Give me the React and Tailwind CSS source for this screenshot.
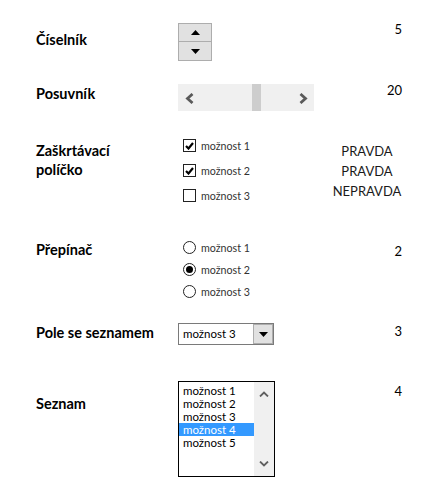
import React from 'react';

const font = { fontFamily: 'Lato, "Liberation Sans", sans-serif' };

function Label({ children, className = '' }) {
  return (
    <div className={`w-[142px] shrink-0 text-[14.5px] font-bold leading-[19px] text-black ${className}`}>
      {children}
    </div>
  );
}

function Value({ children, className = '' }) {
  return (
    <div className={`w-[100px] shrink-0 text-right text-[13px] leading-[16px] text-black ${className}`}>
      {children}
    </div>
  );
}

function Spinner() {
  return (
    <div className="flex h-[38px] w-[34px] flex-col">
      <div className="flex h-[19px] items-center justify-center border border-[#adadad] bg-[#e1e1e1]">
        <svg width="9" height="5" viewBox="0 0 9 5">
          <polygon points="0,5 9,5 4.5,0" fill="#000" />
        </svg>
      </div>
      <div className="flex h-[19px] items-center justify-center border border-t-0 border-[#adadad] bg-[#e1e1e1]">
        <svg width="9" height="5" viewBox="0 0 9 5">
          <polygon points="0,0 9,0 4.5,5" fill="#000" />
        </svg>
      </div>
    </div>
  );
}

function ScrollBar() {
  return (
    <div className="flex h-[27px] w-[136px] items-stretch bg-[#f0f0f0]">
      <div className="flex w-[22px] items-center justify-center pt-[2px]">
        <svg width="9" height="11" viewBox="0 0 9 11">
          <polyline points="7.5,1 2.5,5.5 7.5,10" fill="none" stroke="#5a5a5a" strokeWidth="2.8" />
        </svg>
      </div>
      <div className="w-[52px]" />
      <div className="w-[9px] bg-[#cdcdcd]" />
      <div className="flex-1" />
      <div className="flex w-[22px] items-center justify-center pt-[2px]">
        <svg width="9" height="11" viewBox="0 0 9 11">
          <polyline points="1.5,1 6.5,5.5 1.5,10" fill="none" stroke="#5a5a5a" strokeWidth="2.8" />
        </svg>
      </div>
    </div>
  );
}

function Check({ checked, label }) {
  return (
    <div className="flex h-[25px] items-center gap-[5px]">
      <div className="flex h-[13px] w-[13px] items-center justify-center border border-[#222] bg-white">
        {checked && (
          <svg width="9" height="8" viewBox="0 0 9 8">
            <polyline points="1,4 3.5,6.5 8,1" fill="none" stroke="#000" strokeWidth="2.2" />
          </svg>
        )}
      </div>
      <span className="text-[10.7px] leading-[13px] text-[#333]">{label}</span>
    </div>
  );
}

function Radio({ checked, label }) {
  return (
    <div className="flex h-[22px] items-center gap-[5px]">
      <div className="flex h-[13px] w-[13px] items-center justify-center rounded-full border border-[#222] bg-white">
        {checked && <div className="h-[7px] w-[7px] rounded-full bg-black" />}
      </div>
      <span className="text-[10.7px] leading-[13px] text-[#333]">{label}</span>
    </div>
  );
}

function Combo() {
  return (
    <div className="flex h-[22px] w-[96px] border border-[#7a7a7a] bg-white">
      <div className="flex flex-1 items-center pl-[4px] text-[11.5px] text-black">možnost 3</div>
      <div className="flex w-[20px] items-center justify-center border border-[#adadad] bg-[#e1e1e1]">
        <svg width="9" height="5" viewBox="0 0 9 5">
          <polygon points="0,0 9,0 4.5,5" fill="#000" />
        </svg>
      </div>
    </div>
  );
}

function ListBox() {
  const items = ['možnost 1', 'možnost 2', 'možnost 3', 'možnost 4', 'možnost 5'];
  return (
    <div className="flex h-[96px] w-[97px] border border-black bg-white">
      <div className="flex flex-1 flex-col pt-[2px]">
        {items.map((it, i) => (
          <div
            key={it}
            className={`h-[13px] pl-[4px] text-[11.5px] leading-[13px] ${i === 3 ? 'bg-[#3399ff] text-white' : 'text-black'}`}
          >
            {it}
          </div>
        ))}
      </div>
      <div className="flex w-[20px] flex-col justify-between bg-[#f0f0f0] py-[9px]">
        <svg className="mx-auto" width="10" height="6" viewBox="0 0 10 6">
          <polyline points="1,5.5 5,1.5 9,5.5" fill="none" stroke="#606060" strokeWidth="1.8" />
        </svg>
        <svg className="mx-auto" width="10" height="6" viewBox="0 0 10 6">
          <polyline points="1,0.5 5,4.5 9,0.5" fill="none" stroke="#606060" strokeWidth="1.8" />
        </svg>
      </div>
    </div>
  );
}

export default function App() {
  return (
    <div className="h-[496px] w-[441px] bg-white pl-[36px] pt-[20px]" style={font}>
      {/* Číselník */}
      <div className="flex h-[50px]">
        <Label className="pt-[10px]">Číselník</Label>
        <div className="w-[124px] shrink-0 pt-[3px]">
          <Spinner />
        </div>
        <Value className="pt-[1px]">5</Value>
      </div>

      {/* Posuvník */}
      <div className="flex h-[50px]">
        <Label className="pt-[14px]">Posuvník</Label>
        <div className="w-[124px] shrink-0 pt-[14px]">
          <ScrollBar />
        </div>
        <Value className="pt-[12px]">20</Value>
      </div>

      {/* Zaškrtávací políčko */}
      <div className="flex h-[110px]">
        <Label className="pt-[21px]">
          Zaškrtávací
          <br />
          políčko
        </Label>
        <div className="w-[124px] shrink-0 pt-[13px] pl-[5px]">
          <Check checked label="možnost 1" />
          <Check checked label="možnost 2" />
          <Check label="možnost 3" />
        </div>
        <div className="w-[100px] shrink-0 pt-[21px]">
          <div className="ml-auto w-[70px] text-center text-[13px] leading-[20px] text-[#1a1a1a]">
            <div>PRAVDA</div>
            <div>PRAVDA</div>
            <div>NEPRAVDA</div>
          </div>
        </div>
      </div>

      {/* Přepínač */}
      <div className="flex h-[80px]">
        <Label className="pt-[10px]">Přepínač</Label>
        <div className="w-[124px] shrink-0 pt-[6px] pl-[5px]">
          <Radio label="možnost 1" />
          <Radio checked label="možnost 2" />
          <Radio label="možnost 3" />
        </div>
        <Value className="pt-[13px]">2</Value>
      </div>

      {/* Pole se seznamem */}
      <div className="flex h-[60px]">
        <Label className="pt-[13px]">Pole se seznamem</Label>
        <div className="w-[124px] shrink-0 pt-[13px]">
          <Combo />
        </div>
        <Value className="pt-[13px]">3</Value>
      </div>

      {/* Seznam */}
      <div className="flex h-[110px]">
        <Label className="pt-[24px]">Seznam</Label>
        <div className="w-[124px] shrink-0 pt-[11px]">
          <ListBox />
        </div>
        <Value className="pt-[13px]">4</Value>
      </div>
    </div>
  );
}
